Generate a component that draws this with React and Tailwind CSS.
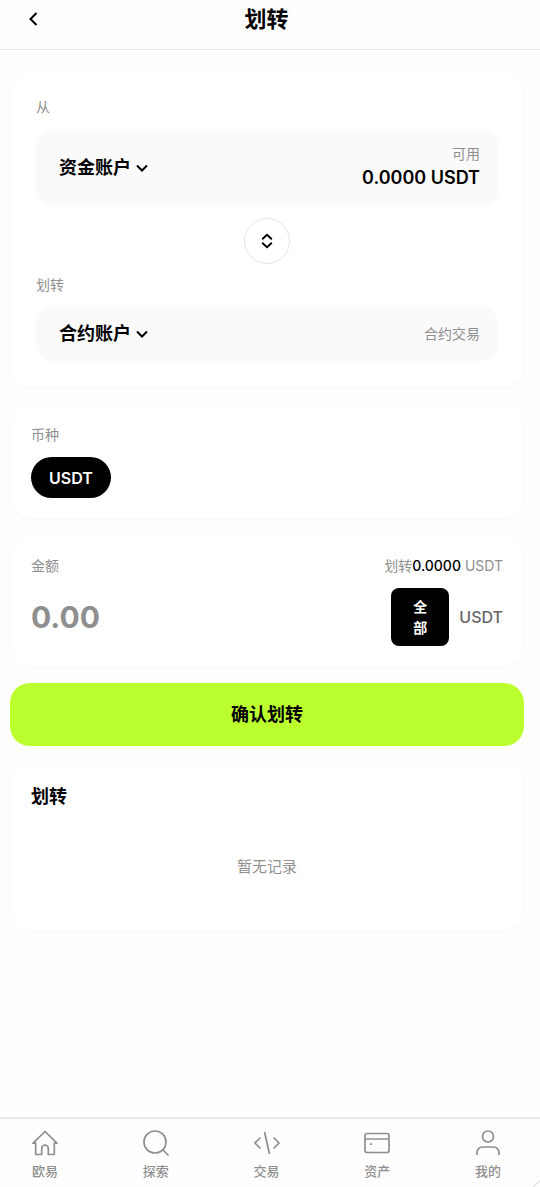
import React, { useState } from "react";

const accounts = ["资金账户", "合约账户"];

const ChevronDown = () => (
  <svg
    className="w-3 h-3 pointer-events-none"
    viewBox="0 0 12 12"
    fill="none"
    stroke="currentColor"
    strokeWidth="2"
  >
    <path d="M1 3.5 6 8.500 11 3.5" />
  </svg>
);

const HomeIcon = () => (
  <svg viewBox="0 0 28 28" className="w-7 h-7" fill="none" stroke="currentColor" strokeWidth="1.7" strokeLinejoin="round">
    <path d="M2 14.200 14 2.500l12 11.700h-2.700v11.300h-6v-6a3.300 3.300 0 0 0-6.600 0v6h-6V14.200Z" />
  </svg>
);

const SearchIcon = () => (
  <svg viewBox="0 0 28 28" className="w-7 h-7" fill="none" stroke="currentColor" strokeWidth="1.7">
    <circle cx="13" cy="13" r="11" />
    <path d="m20.500 20.500 6 6" />
  </svg>
);

const TradeIcon = () => (
  <svg viewBox="0 0 28 28" className="w-7 h-7" fill="none" stroke="currentColor" strokeWidth="1.7">
    <path d="M7.500 8.500 2 14l5.500 5.500M20.500 8.500 26 14l-5.500 5.500M11.500 3l5 22" />
  </svg>
);

const AssetsIcon = () => (
  <svg viewBox="0 0 28 28" className="w-7 h-7" fill="none" stroke="currentColor" strokeWidth="1.7">
    <rect x="2" y="4.500" width="24" height="19" rx="2" />
    <path d="M2 10h24M7 15.200h2" />
  </svg>
);

const UserIcon = () => (
  <svg viewBox="0 0 28 28" className="w-7 h-7" fill="none" stroke="currentColor" strokeWidth="1.7">
    <circle cx="14" cy="7.500" r="5.500" />
    <path d="M3 26v-2.500a5.500 5.500 0 0 1 5.500-5.500h11a5.500 5.500 0 0 1 5.500 5.500V26" />
  </svg>
);

const navItems = [
  { label: "欧易", Icon: HomeIcon },
  { label: "探索", Icon: SearchIcon },
  { label: "交易", Icon: TradeIcon },
  { label: "资产", Icon: AssetsIcon },
  { label: "我的", Icon: UserIcon },
];

const AccountSelect = ({ id, value, onChange }) => (
  <div className="flex items-center gap-[5px]">
    <select
      id={id}
      value={value}
      onChange={(e) => onChange(e.target.value)}
      className="appearance-none bg-transparent text-lg leading-6 font-bold outline-none"
    >
      {accounts.map((name) => (
        <option key={name}>{name}</option>
      ))}
    </select>
    <ChevronDown />
  </div>
);

const Card = ({ className, children }) => (
  <section className={`bg-white border border-[#fbfbfb] rounded-[20px] shadow-xs shadow-black/2 ${className}`}>
    {children}
  </section>
);

const App = () => {
  const [from, setFrom] = useState("资金账户");
  const [to, setTo] = useState("合约账户");
  const [amount, setAmount] = useState("");

  // Swap accounts
  const onSwap = () => {
    setFrom(to);
    setTo(from);
  };

  return (
    <div className="min-h-screen flex flex-col bg-[#fefefe] text-black font-[Inter,'Noto_Sans_CJK_SC',sans-serif]">
      {/* Header */}
      <header className="grid grid-cols-[1fr_auto_1fr] items-start h-[50px] pl-[23px] pr-[30px] pt-[5px] border-b border-[#e5e5e5]">
        <button type="button" aria-label="返回" className="w-5 h-7 flex items-center justify-center">
          <svg viewBox="0 0 10 16" className="w-2.5 h-4" fill="none" stroke="currentColor" strokeWidth="2">
            <path d="M8.500 2 2.500 8l6 6" />
          </svg>
        </button>
        <h1 className="text-[22px] leading-7 font-bold">划转</h1>
      </header>

      <main className="flex-1 flex flex-col gap-4 pl-2.5 pr-4 pt-5">
        {/* Accounts */}
        <Card className="px-[25px] py-[26px]">
          <label htmlFor="from" className="block text-sm leading-5 text-[#8f8f8f]">
            从
          </label>
          <div className="mt-3 flex items-center justify-between rounded-2xl bg-[#fafafa] pl-[23px] pr-[18px] py-[15px]">
            <AccountSelect id="from" value={from} onChange={setFrom} />
            <div className="text-right">
              <p className="text-sm leading-5 text-[#8f8f8f]">可用</p>
              <p className="text-lg leading-7 font-semibold">0.0000 USDT</p>
            </div>
          </div>

          <button
            type="button"
            aria-label="切换"
            onClick={onSwap}
            className="mx-auto mt-[11px] w-[46px] h-[46px] rounded-full border border-[#e5e5e5] bg-white flex items-center justify-center"
          >
            <svg viewBox="0 0 12 16" className="w-3 h-4" fill="none" stroke="currentColor" strokeWidth="1.9">
              <path d="M1.200 6.200 6 1.800 10.800 6.200M1.200 9.800 6 14.200 10.800 9.800" />
            </svg>
          </button>

          <label htmlFor="to" className="mt-[11px] block text-sm leading-5 text-[#8f8f8f]">
            划转
          </label>
          <div className="mt-3 flex items-center justify-between rounded-2xl bg-[#fafafa] pl-[23px] pr-[18px] py-[15px]">
            <AccountSelect id="to" value={to} onChange={setTo} />
            <span className="text-sm leading-5 text-[#8f8f8f]">合约交易</span>
          </div>
        </Card>

        {/* Coin */}
        <Card className="px-5 py-5">
          <h2 className="text-sm leading-5 text-[#8f8f8f]">币种</h2>
          <button
            type="button"
            className="mt-3 h-[41px] px-[18px] rounded-full bg-black text-white text-base leading-6 font-semibold"
          >
            USDT
          </button>
        </Card>

        {/* Amount */}
        <Card className="px-5 py-5">
          <div className="flex justify-between text-sm leading-5 text-[#8f8f8f]">
            <label htmlFor="amount">金额</label>
            <p>
              划转<span className="text-black font-medium">0.0000</span> USDT
            </p>
          </div>
          <div className="mt-3 flex items-center">
            <input
              id="amount"
              type="text"
              inputMode="decimal"
              value={amount}
              onChange={(e) => setAmount(e.target.value)}
              placeholder="0.00"
              className="flex-1 min-w-0 text-3xl leading-10 font-bold outline-none placeholder:text-[#8f8f8f]"
            />
            <button
              type="button"
              onClick={() => setAmount("0.0000")}
              className="w-[58px] px-5 py-2 rounded-lg bg-black text-white text-sm leading-[21px] font-bold"
            >
              全部
            </button>
            <span className="ml-2.5 text-base leading-6 font-medium text-[#666]">USDT</span>
          </div>
        </Card>

        <button type="button" className="h-[63px] rounded-[20px] bg-[#bcff2f] text-lg leading-6 font-bold">
          确认划转
        </button>

        {/* Records */}
        <Card className="px-5 pt-5 pb-[51px]">
          <h2 className="text-lg leading-7 font-bold">划转</h2>
          <p className="mt-11 text-center text-[15px] leading-6 text-[#8f8f8f]">暂无记录</p>
        </Card>
      </main>

      {/* Bottom nav */}
      <nav className="relative flex justify-between h-[70px] pl-[31px] pr-[38px] pt-2.5 border-t-2 border-[#e8e8e8] text-[#8f8f8f]">
        {navItems.map(({ label, Icon }) => (
          <a key={label} href="#" className="flex flex-col items-center w-7 gap-1">
            <Icon />
            <span className="text-[13px] leading-5 font-medium whitespace-nowrap">{label}</span>
          </a>
        ))}
        <svg
          viewBox="0 0 8 8"
          className="absolute right-0 bottom-0 w-2 h-2 text-[#cfcfcf]"
          fill="none"
          stroke="currentColor"
        >
          <path d="M1 8 8 2" />
        </svg>
      </nav>
    </div>
  );
};

export default App;
